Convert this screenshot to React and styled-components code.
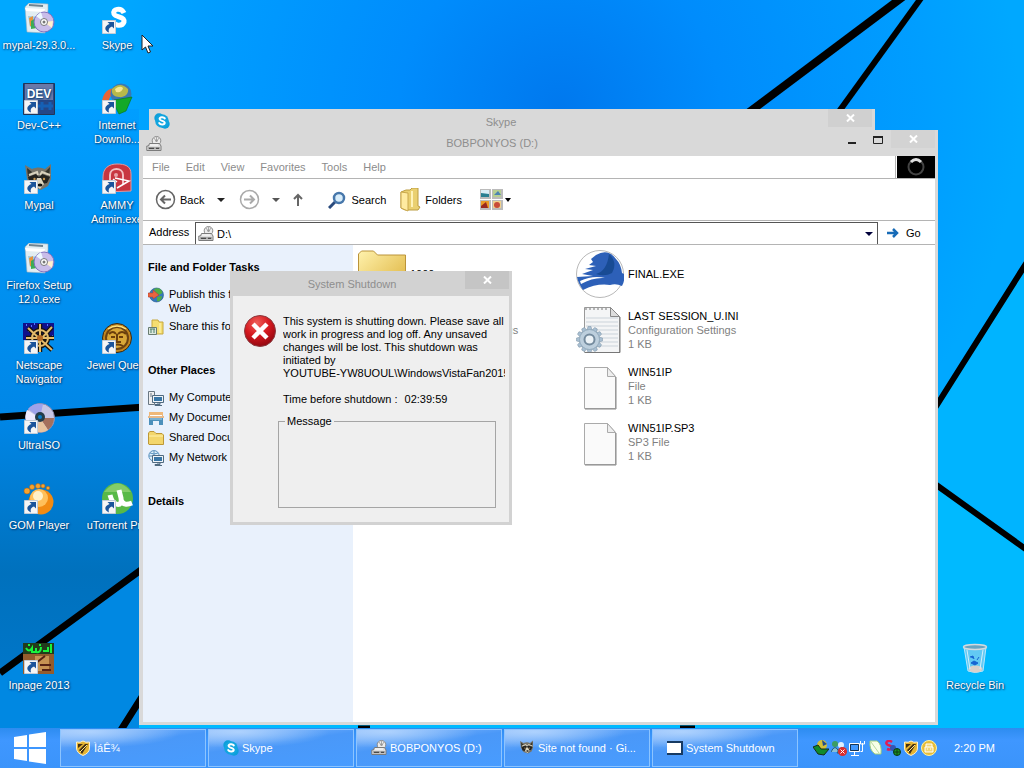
import React from 'react';
import styled, { createGlobalStyle, css } from 'styled-components';

const GlobalStyle = createGlobalStyle`
  * { box-sizing: border-box; }
  body {
    margin: 0;
    font-family: "Liberation Sans", Arial, sans-serif;
    font-size: 11px;
    line-height: 14px;
    color: #000;
    overflow: hidden;
  }
  button, input { font: inherit; color: inherit; }
  button { border: 0; padding: 0; background: none; }
  svg { display: block; flex: none; }
`;

const Screen = styled.div`
  display: flex;
  flex-direction: column;
  height: 100vh;
`;

const Desktop = styled.main`
  position: relative;
  flex: 1;
  min-height: 0;
`;

const Wallpaper = styled.svg`
  position: absolute;
  inset: 0;
  width: 100%;
  height: 100%;
`;

const IconGrid = styled.div`
  position: relative;
  display: grid;
  grid-template-columns: 78px 78px 1fr 78px;
  grid-auto-rows: 80px;
  padding: 3px 10px 0 0;
`;

const ShortcutButton = styled.button`
  grid-column: ${(p) => p.$col};
  grid-row: ${(p) => p.$row};
  display: flex;
  flex-direction: column;
  align-items: center;
  justify-content: flex-start;
  gap: 3px;
  color: #fff;
  text-align: center;
  white-space: nowrap;
  text-shadow: 1px 1px 2px #003a70, 0 0 2px #00508f;
`;

const ShortcutLabel = styled.span`
  white-space: pre;
`;

const Cursor = styled.svg`
  position: absolute;
  left: 141px;
  top: 34px;
`;

/* Windows */
const frame = css`
  position: absolute;
  display: flex;
  flex-direction: column;
  background: #d9d9d9;
`;

const SkypeWindow = styled.section`
  ${frame}
  left: 149px;
  right: 149px;
  top: 109px;
  height: 200px;
  padding: 0 3px;
`;

const ExplorerWindow = styled.section`
  ${frame}
  left: 139px;
  right: 86px;
  top: 130px;
  bottom: 3px;
  padding: 0 3px 3px 4px;
`;

const DialogWindow = styled.section`
  ${frame}
  left: 230px;
  top: 271px;
  width: 282px;
  height: 254px;
  padding: 0 3px;
  border-bottom: 3px solid #d2d2d2;
  background: #d2d2d2;
`;

const TitleBar = styled.header`
  position: relative;
  flex: none;
  display: flex;
  align-items: center;
  justify-content: center;
  height: ${(p) => p.$height}px;
`;

const WindowTitle = styled.h1`
  margin: 0;
  padding-right: ${(p) => p.$shift || 0}px;
  font-size: 11px;
  font-weight: 400;
  color: #8e8e8e;
`;

const TitleIcon = styled.span`
  position: absolute;
  left: ${(p) => p.$left}px;
  bottom: ${(p) => p.$bottom}px;
`;

const WindowButtons = styled.div`
  position: absolute;
  top: 0;
  right: 0;
  display: flex;
`;

const FrameButton = styled.button`
  display: grid;
  place-items: center;
  width: 26px;
  height: 19px;
`;

const CloseButton = styled(FrameButton)`
  width: 44px;
  height: 18px;
  background: ${(p) => p.$tone};
`;

/* Explorer */
const MenuBar = styled.nav`
  display: flex;
  flex: none;
  height: 23px;
  background: #fff;
  border-bottom: 1px solid #b4b4b4;
`;

const MenuItems = styled.div`
  display: flex;
  flex: 1;
  align-items: center;
  gap: 16px;
  padding-left: 9px;
  color: #8c8c8c;
  border-right: 1px solid #b4b4b4;
`;

const Throbber = styled.div`
  display: grid;
  place-items: center;
  width: 39px;
  border-left: 1px solid #fff;
  background: #000;
`;

const Toolbar = styled.div`
  display: flex;
  flex: none;
  align-items: center;
  height: 42px;
  padding-left: 12px;
  background: #fff;
  border-bottom: 1px solid #b4b4b4;
`;

const ToolButton = styled.button`
  display: flex;
  align-items: center;
  gap: ${(p) => p.$gap || 4}px;
  margin-right: ${(p) => p.$after || 0}px;
`;

const AddressBar = styled.div`
  display: flex;
  flex: none;
  height: 24px;
  background: #fff;
  border-bottom: 1px solid #b4b4b4;
`;

const AddressLabel = styled.label`
  width: 52px;
  padding: 4px 0 0 6px;
`;

const AddressField = styled.div`
  display: flex;
  flex: 1;
  align-items: center;
  margin-top: 1px;
  padding: 0 4px 0 2px;
  border: solid #555;
  border-width: 1px 1px 0 1px;
`;

const AddressInput = styled.input`
  flex: 1;
  min-width: 0;
  padding: 0 3px;
  border: 0;
  outline: 0;
  background: none;
`;

const GoButton = styled.button`
  display: flex;
  align-items: center;
  gap: 6px;
  width: 57px;
  padding-left: 8px;
`;

const ExplorerBody = styled.div`
  display: flex;
  flex: 1;
  min-height: 0;
  background: #fff;
`;

const Sidebar = styled.aside`
  display: flex;
  flex-direction: column;
  gap: 28px;
  width: 210px;
  padding: 15px 5px;
  background: #e9f1fc;
`;

const TaskHeading = styled.h2`
  margin: 0;
  font-size: 11px;
  font-weight: 700;
`;

const TaskList = styled.ul`
  display: flex;
  flex-direction: column;
  gap: 4px;
  margin: 13px 0 0;
  padding: 0;
  list-style: none;
`;

const TaskLink = styled.a`
  display: flex;
  gap: 5px;
  min-height: 16px;
  color: #000;
  text-decoration: none;
`;

const TaskText = styled.span`
  width: 132px;
`;

const Files = styled.div`
  display: flex;
  flex: 1;
  padding: 1px 0 0 5px;
`;

const FileColumn = styled.ul`
  width: 218px;
  margin: 0;
  padding: 0;
  list-style: none;
`;

const FileItem = styled.li`
  display: flex;
  align-items: center;
  gap: 4px;
  height: 56px;
`;

const FileDetail = styled.div`
  min-height: 14px;
  color: ${(p) => (p.$muted ? '#7f7f7f' : '#000')};
`;

/* Dialog */
const DialogBody = styled.div`
  display: flex;
  flex: 1;
  gap: 7px;
  min-height: 0;
  padding: 19px 4px 0 11px;
  background: #efefef;
  line-height: 13px;
`;

const DialogContent = styled.div`
  flex: 1;
  min-width: 0;
`;

const DialogText = styled.p`
  margin: 0 0 13px;
  overflow: hidden;
  white-space: nowrap;
`;

const TimeRow = styled.p`
  display: flex;
  gap: 7px;
  margin: 0 0 9px;
`;

const MessageBox = styled.fieldset`
  height: 93px;
  margin: 0 9px 0 -5px;
  padding: 0 6px;
  border: 1px solid #a5a5a5;
`;

const MessageLegend = styled.legend`
  padding: 0 2px;
`;

/* Taskbar */
const Taskbar = styled.footer`
  display: flex;
  flex: none;
  align-items: stretch;
  height: 40px;
  background: linear-gradient(#2d8cf0, #3f97ff 30%, #3b94fb);
  color: #fff;
`;

const StartButton = styled.button`
  display: grid;
  place-items: center;
  width: 60px;
`;

const TaskButtons = styled.div`
  display: flex;
  flex: 1;
  gap: 2px;
  padding: 1px 0;
`;

const TaskButton = styled.button`
  display: flex;
  flex: 0 1 146px;
  align-items: center;
  gap: 3px;
  padding-left: 14px;
  border: 1px solid #8cc4ff;
  background:
    radial-gradient(ellipse 90px 16px at 30px 2px, rgba(190, 220, 255, 0.75), transparent),
    linear-gradient(172deg, #86b8fa 5%, #4a98f8 40%, #489cff);
  white-space: nowrap;
`;

const Tray = styled.div`
  display: flex;
  align-items: center;
  gap: 2px;
  width: 225px;
  padding-left: 14px;
`;

const Clock = styled.time`
  margin-left: 15px;
`;

/* Drawings */
const Caret = ({ color = '#000' }) => (
  <svg width="8" height="4" viewBox="0 0 8 4"><path d="M0 0h8L4 4z" fill={color} /></svg>
);

const CloseMark = () => (
  <svg width="9" height="8" viewBox="0 0 9 8"><path d="M1 0.5l7 7M8 0.5l-7 7" stroke="#fff" strokeWidth="2" /></svg>
);

const Drive = ({ size = 16 }) => (
  <svg width={size} height={size} viewBox="0 0 16 16">
    <circle cx="10.5" cy="4.8" r="4.3" fill="#ececec" stroke="#8b8b8b" />
    <path d="M10.5 1v3M8 2l2 3M13 2l-2 3" stroke="#aaa" />
    <circle cx="10.5" cy="4.8" r="1.2" fill="#999" />
    <path d="M2.500 10l1-2.500h10l1.500 2.500v4.500H.8V10z" fill="#dedede" stroke="#7b7b7b" />
    <path d="M2 11h12v2.500H2z" fill="#aaa" />
    <path d="M3 12.300h5M10 12.300h3" stroke="#333" />
    <path d="M4 9h8" stroke="#fff" />
  </svg>
);

const SkypeLogo = () => (
  <svg width="16" height="16" viewBox="0 0 16 16">
    <circle cx="5" cy="5" r="4.7" fill="#0c9fdb" />
    <circle cx="11" cy="11" r="4.7" fill="#0c9fdb" />
    <circle cx="8" cy="8" r="6.8" fill="#12a5df" />
    <path d="M10.8 5.4C9.6 3.5 5.5 3.9 5.6 6c.1 2.3 5.1 1.4 5.1 3.8 0 2.3-4.3 2.4-5.5.3" fill="none" stroke="#fff" strokeWidth="2" strokeLinecap="round" />
  </svg>
);

const Globe = ({ arrow }) => (
  <svg width="16" height="16" viewBox="0 0 16 16">
    <circle cx="8.5" cy="8" r="7" fill="#3478bd" stroke="#245684" strokeWidth=".6" />
    <path d="M6 2c4-2 8 0 8.5 4L11 8 8 6zM9 10l5-1c0 4-3 6-5 5z" fill="#51ad45" />
    {arrow && <path d="M0 6h5V3l6 5-6 4v-2H0z" fill="#e86540" stroke="#b53a26" strokeWidth=".5" />}
  </svg>
);

const SmallFolder = () => (
  <svg width="16" height="16" viewBox="0 0 16 16">
    <path d="M.5 14V2.8L2 1.5h4l2 2h6l1.5 1.5v9.5H1z" fill="#f3d66b" stroke="#bd9837" />
    <path d="M1 6h14" stroke="#fff1ad" />
  </svg>
);

const ShareFolder = () => (
  <svg width="16" height="16" viewBox="0 0 16 16">
    <path d="M4 1h6l1 2h4v12H4z" fill="#f4de70" stroke="#c6a83f" />
    <path d="M12 4v10" stroke="#fff8bd" />
    <path d="M.5 8.5h8v7h-8z" fill="#dce7dd" stroke="#687c70" />
    <path d="M2 10h5M3 10v4M6 10v4" stroke="#4a806a" />
  </svg>
);

const Computer = ({ network }) => (
  <svg width="16" height="16" viewBox="0 0 16 16">
    {network ? (
      <g fill="#e0f0fb" stroke="#5890bc"><circle cx="6" cy="5.8" r="5.2" /><path d="M1 6h10M6 1v10M2 3q4 2 8 0" fill="none" /></g>
    ) : (
      <g fill="#eee" stroke="#697782"><path d="M.5 1.5h6v13h-6z" /><path d="M2 4h2M2 6h2" /></g>
    )}
    <path d="M4.5 5.5h11v7h-11z" fill="#eef3f8" stroke="#506a7f" />
    <path d="M6 7h8v4H6z" fill="#3776a7" />
    <path d="M9 13h3v1.5H7v1h7" fill="none" stroke="#506a7f" />
  </svg>
);

const Documents = () => (
  <svg width="16" height="16" viewBox="0 0 16 16">
    <path d="M1 2h14v4H1z" fill="#efb879" /><path d="M2 5h12v4H2z" fill="#fff" />
    <path d="M0 6h16v2H0z" fill="#e7b98b" />
    <path d="M1 8h14v7h-4v-4H5v4H1z" fill="#4c90bb" /><path d="M2 9h12" stroke="#a4d2ee" />
  </svg>
);

const ErrorMark = () => (
  <svg width="32" height="32" viewBox="0 0 32 32">
    <defs><radialGradient id="err" cx=".4" cy=".25" r=".8"><stop stopColor="#f0605a" /><stop offset=".5" stopColor="#d5191f" /><stop offset="1" stopColor="#8c050e" /></radialGradient></defs>
    <circle cx="16" cy="16" r="15.5" fill="url(#err)" stroke="#8a3a3e" />
    <path d="M9 9l14 14M23 9L9 23" stroke="#fff" strokeWidth="4.500" />
  </svg>
);

const Overlay = () => (
  <g>
    <path d="M1.500 17.500h13v13h-13z" fill="#f5f5f5" stroke="#c3ccd7" />
    <path d="M6.500 19H13v6.500l-2-2c-3 1-4 3-3 6C3 27.500 3 23 8.500 21z" fill="#1b549b" />
  </g>
);

const Art = ({ children, link = true }) => (
  <svg width="32" height="32" viewBox="0 0 32 32">{children}{link && <Overlay />}</svg>
);

const Installer = () => (
  <Art link={false}>
    <path d="M2 4l4-4 19 1v6l-3 23-18-1z" fill="#e2edf2" stroke="#9db0bd" strokeWidth=".6" />
    <path d="M2 5l20 1-1 3L3 8z" fill="#fff" /><path d="M6 2l14 1" stroke="#708491" strokeWidth="2" />
    <path d="M5 13l12 1-1 10H7z" fill="#9ccbe4" /><path d="M6 15l4-2v10H7z" fill="#e7943c" /><path d="M8 18l5-3 1 10-6 1z" fill="#3bad56" />
    <circle cx="21" cy="19" r="10" fill="#c9bde9" stroke="#8272bf" />
    <path d="M21 19L13 13l5-4z" fill="#edf8ff" /><path d="M21 19l8 6 1-7z" fill="#fff0cf" />
    <circle cx="21" cy="19" r="3.500" fill="#fff" stroke="#777" /><circle cx="21" cy="19" r="1.500" fill="#777" />
  </Art>
);

const Raccoon = () => (
  <g>
    <path d="M2 2l7 4c5-2 9-2 13 0l6-5v15l-3 7-7 4-9-3-5-8z" fill="#77746a" />
    <path d="M4 5l5 4-4 5zM27 4l-5 5 4 5z" fill="#34352d" />
    <path d="M5 14l8-3 3 3 3-3 8 3-3 6-5 1-3-3-3 4-6-1z" fill="#24231f" />
    <path d="M6 12l8-3 1 3M17 12l2-3 8 3" stroke="#d9d2bd" strokeWidth="2" fill="none" />
    <path d="M14 15h4l3 6-4 5-5-4z" fill="#ddd5be" />
    <circle cx="11.500" cy="16" r="1.200" fill="#c69751" /><circle cx="21" cy="16" r="1.200" fill="#c69751" />
    <ellipse cx="17" cy="22" rx="2.500" ry="1.500" fill="#111" />
  </g>
);

const DevArt = () => (
  <Art>
    <path d="M.5.5h31v31H.5z" fill="#244788" stroke="#223557" /><path d="M2 1h28v16H2z" fill="#6979a9" />
    <text x="16" y="15" textAnchor="middle" fill="#fff" fontSize="12" fontWeight="700">DEV</text>
    <path d="M19 19v8M15 23h8M27 19v8M23 23h7" stroke="#1560b5" strokeWidth="3" />
  </Art>
);

const SkypeArt = () => (
  <Art><path d="M23 10C20 4 11 6 13 11c2 4 11 2 10 8-2 5-10 4-11-1" fill="none" stroke="#fff" strokeWidth="5" /></Art>
);

const IdmArt = () => (
  <Art>
    <path d="M1 24C0 13 5 6 13 5l2 6c-6 0-8 5-7 12z" fill="#e86435" />
    <circle cx="20" cy="11" r="10.500" fill="#3978b4" /><path d="M11 6q8-8 16 0c1 5-4 9-9 8-5 0-8-3-7-8z" fill="#b8b94b" /><path d="M14 6q5-4 8-1-1 5-7 4z" fill="#f5e894" />
    <path d="M13 17l18-3-6 14-7 3-4-8-3-2z" fill="#13a928" stroke="#087018" strokeWidth=".6" />
  </Art>
);

const AmmyArt = () => (
  <Art>
    <path d="M2 29V14C2 5 8 1 16 1s14 2 14 10v17z" fill="#c83640" stroke="#e6969a" />
    <path d="M9 20v-8c0-8 13-8 13 0v10" fill="none" stroke="#f2bdc0" strokeWidth="2" />
    <circle cx="15" cy="12" r="2" fill="#e7a5a9" /><path d="M14 15l14 3-12 7M16 19l-4-3" fill="none" stroke="#fff" strokeWidth="1.500" />
  </Art>
);

const NetscapeArt = () => (
  <Art>
    <path d="M0 0h31v17H0z" fill="#10108a" />
    <path d="M3 2h1M8 3h1M5 8h1M11 1h1M24 2h1M28 6h1M4 14h1M29 13h1" stroke="#5573ff" strokeWidth="2" />
    <g stroke="#17120d" strokeWidth="4.500" fill="none"><circle cx="17" cy="15" r="8" /><path d="M5 5l24 22M29 4L7 28M17 1v28M3 15h28" /></g>
    <g stroke="#e4bb6b" strokeWidth="2" fill="none"><circle cx="17" cy="15" r="8" /><path d="M5 5l24 22M29 4L7 28M17 1v28M3 15h28" /></g>
    <circle cx="17" cy="15" r="3" fill="#b46a27" />
  </Art>
);

const JewelArt = () => (
  <Art>
    <circle cx="16" cy="15" r="14.500" fill="#c18620" stroke="#392610" /><circle cx="16" cy="15" r="11" fill="#d9a737" stroke="#6d4312" strokeWidth="2" />
    <path d="M8 11q4-4 7 0M17 11q4-4 8 0M16 11v6l-3 2h7M11 23q6-3 11 0M10 14h4M18 14h4" fill="none" stroke="#6b3e0c" strokeWidth="2" />
    <path d="M7 6q9-6 18 0" fill="none" stroke="#ffe27a" strokeWidth="1.500" />
  </Art>
);

const DiscArt = () => (
  <Art>
    <circle cx="17" cy="15" r="14.500" fill="#c7c5e4" stroke="#8b8bae" /><path d="M17 15L5 6Q10 0 20 1z" fill="#9ea2ea" />
    <path d="M17 15h14q0 7-6 12z" fill="#a4705d" /><path d="M17 15l8 12q-6 4-12 1z" fill="#e8c39e" /><path d="M17 15L4 7q-3 7 0 12z" fill="#eeeaff" />
    <circle cx="17" cy="14" r="5" fill="#243c4a" /><circle cx="17" cy="14" r="2" fill="#087bc7" />
  </Art>
);

const GomArt = () => (
  <Art>
    <circle cx="18" cy="19" r="12.500" fill="#f28b13" /><circle cx="16" cy="15" r="9" fill="#ffc05b" /><circle cx="15" cy="13" r="5" fill="#fff0c8" />
    <g fill="#f8a42c" stroke="#b75f10" strokeWidth=".5"><circle cx="4" cy="8" r="3" /><circle cx="9" cy="4" r="2.500" /><circle cx="15" cy="3" r="2.500" /><circle cx="20" cy="3" r="2" /><circle cx="25" cy="5" r="1.800" /></g>
  </Art>
);

const TorrentArt = () => (
  <Art>
    <circle cx="16.500" cy="15.500" r="15.500" fill="#58b947" /><path d="M3 9Q17-8 30 9" fill="#83cc68" />
    <path d="M9 12c3 12 13 12 11 3L18 7M20 17c2 5 6 5 11 3" fill="none" stroke="#fff" strokeWidth="5" />
  </Art>
);

const InpageArt = () => (
  <Art>
    <path d="M0 0h31v31H0z" fill="#935c2d" /><path d="M0 0h31v11H0z" fill="#223c1c" /><path d="M12 13h14v15H12z" fill="#c69353" />
    <path d="M3 5q3 5 6 0v4h4V5M13 9q5 1 5-5M20 8h5V4M28 1v9M5 2h2M16 2h2" stroke="#18f53d" strokeWidth="2" fill="none" />
    <path d="M13 20l9-7M17 22h11M19 27h9" stroke="#552315" strokeWidth="2" />
  </Art>
);

const BinArt = () => (
  <Art link={false}>
    <path d="M5 4h22l-3 24q-8 3-15 0z" fill="#83cdf0" fillOpacity=".75" stroke="#b9e7fc" />
    <ellipse cx="16" cy="4" rx="11.500" ry="2.500" fill="#68a4c1" stroke="#d4dade" strokeWidth="1.500" />
    <ellipse cx="16.500" cy="26" rx="7" ry="3.500" fill="#d9d0ca" /><path d="M8 7l3 19M24 7l-3 19" stroke="#d4f0fb" />
    <path d="M11 14l3-1 1 3M20 14l-2 3M15 18l-3 2 4 2 3-2z" fill="#1765d2" stroke="#1765d2" />
  </Art>
);

const Shield = () => (
  <svg width="16" height="16" viewBox="0 0 16 16">
    <path d="M1.500 2q4 1 6.500-1 2.500 2 6.500 1v6q0 5-6.500 7.500Q1.500 13 1.500 8z" fill="#e5b431" stroke="#fff0c8" />
    <path d="M4 10l6-6h3L7 14zM3 4h5l-5 4z" fill="#443014" /><path d="M5 12l7-7" stroke="#ffe989" />
  </svg>
);

const BlankFile = () => (
  <svg width="48" height="48" viewBox="0 0 48 48">
    <path d="M8.500 5.500h23l8 9v32h-31z" fill="#fafafa" stroke="#aaa" /><path d="M31.500 5.500v9h8z" fill="#eee" stroke="#aaa" /><path d="M9 47h31V15" fill="none" stroke="#888" />
  </svg>
);

const IniFile = () => {
  const teeth = [0, 30, 60, 90, 120, 150, 180, 210, 240, 270, 300, 330];
  return (
    <svg width="48" height="48" viewBox="0 0 48 48">
      <path d="M8.500 1.500h26l9 9v36h-35z" fill="#f4f5f6" stroke="#999" /><path d="M34.500 1.500v9h9z" fill="#ddd" stroke="#888" />
      <path d="M10 12h32M10 16h32M10 20h32M10 24h32M10 28h32M10 32h32M10 36h32M10 40h32" stroke="#cbd3da" />
      <path d="M10 2v2M14 2v2M18 2v2M22 2v2M26 2v2M30 2v2" stroke="#777" />
      <g transform="translate(13.5 33.500)">
        {teeth.map((a) => <path key={a} d="M-1.500-13h3L2.500-9h-5z" fill="#a9bfd2" stroke="#7890a5" strokeWidth=".5" transform={`rotate(${a})`} />)}
        <circle r="10" fill="#bdcfdd" stroke="#829bad" strokeWidth=".6" /><circle r="5" fill="#edf3f7" stroke="#748b9e" strokeWidth="2" />
      </g>
      <path d="M9 46.500h35V11" fill="none" stroke="#777" />
    </svg>
  );
};

const FinalFile = () => (
  <svg width="48" height="48" viewBox="0 0 48 48">
    <circle cx="24" cy="24" r="23.500" fill="#fff" stroke="#999" strokeWidth=".7" />
    <path d="M1 27l16-1-11-2 11-4-8-1 11-3-7-1 4-3-2-3 5-4q12-7 20 4 5 5 6 14l2 1q1 7-2 12-6-3-12-1-13-2-27 5-5-7-6-13z" fill="#2d60b8" />
    <path d="M4 31q13-6 25-3-12-1-24 6z" fill="#fff" />
    <path d="M33 4q9 8 3 19-7 4-16 1 11-3 13-20z" fill="#184b94" />
  </svg>
);

const LargeFolder = () => (
  <svg width="48" height="48" viewBox="0 0 48 48">
    <defs><linearGradient id="folder" x2="1" y2="1"><stop stopColor="#fff2ad" /><stop offset="1" stopColor="#dbae35" /></linearGradient></defs>
    <path d="M.5 44V4l3-3h12l4 4h28v39z" fill="url(#folder)" stroke="#bb943a" />
  </svg>
);

const RoundArrow = ({ forward }) => (
  <svg width="21" height="21" viewBox="0 0 21 21" stroke={forward ? '#aaa' : '#666'} fill="none">
    <circle cx="10.500" cy="10.500" r="9" strokeWidth="1.500" />
    <path d={forward ? 'M5 10.500h10M11 6.500l4 4-4 4' : 'M16 10.500H6M10 6.500l-4 4 4 4'} strokeWidth="2" />
  </svg>
);

const shortcuts = [
  ['mypal-29.3.0...', 1, 1, Installer],
  ['Skype', 2, 1, SkypeArt],
  ['Dev-C++', 1, 2, DevArt],
  ['Internet\nDownlo...', 2, 2, IdmArt],
  ['Mypal', 1, 3, () => <Art><Raccoon /></Art>],
  ['AMMY\nAdmin.exe', 2, 3, AmmyArt],
  ['Firefox Setup\n12.0.exe', 1, 4, Installer],
  ['Netscape\nNavigator', 1, 5, NetscapeArt],
  ['Jewel Quest', 2, 5, JewelArt],
  ['UltraISO', 1, 6, DiscArt],
  ['GOM Player', 1, 7, GomArt],
  ['uTorrent Pro', 2, 7, TorrentArt],
  ['Inpage 2013', 1, 9, InpageArt],
  ['Recycle Bin', 4, 9, BinArt],
];

const TaskLine = ({ icon, children }) => (
  <li><TaskLink href="#">{icon}<TaskText>{children}</TaskText></TaskLink></li>
);

const FileEntry = ({ icon, name, details = [] }) => (
  <FileItem>
    {icon}
    <div>
      <FileDetail>{name}</FileDetail>
      {details.map((d) => <FileDetail $muted key={d}>{d}</FileDetail>)}
    </div>
  </FileItem>
);

const Explorer = () => (
  <ExplorerWindow>
    <TitleBar $height={26}>
      <TitleIcon $left={3} $bottom={4}><Drive /></TitleIcon>
      <WindowTitle $shift={94}>BOBPONYOS (D:)</WindowTitle>
      <WindowButtons>
        <FrameButton aria-label="Minimize"><svg width="8" height="10"><path d="M0 7h8v2H0z" fill="#222" /></svg></FrameButton>
        <FrameButton aria-label="Maximize"><svg width="10" height="8"><path d="M.5 1h9v6.500h-9z" fill="none" stroke="#222" /><path d="M0 1h10" stroke="#222" strokeWidth="2" /></svg></FrameButton>
        <CloseButton $tone="#d3d3d3" aria-label="Close"><CloseMark /></CloseButton>
      </WindowButtons>
    </TitleBar>
    <MenuBar>
      <MenuItems>
        {['File', 'Edit', 'View', 'Favorites', 'Tools', 'Help'].map((m) => <button key={m}>{m}</button>)}
      </MenuItems>
      <Throbber>
        <svg width="18" height="18"><circle cx="9" cy="9" r="7.500" fill="none" stroke="#444" strokeWidth="2" /><path d="M4 4q5-5 10 0" fill="none" stroke="#ddd" strokeWidth="3" /></svg>
      </Throbber>
    </MenuBar>
    <Toolbar>
      <ToolButton $after={13}><RoundArrow />Back</ToolButton>
      <ToolButton $after={14} aria-label="Back history"><Caret color="#222" /></ToolButton>
      <ToolButton $gap={12} $after={13} aria-label="Forward"><RoundArrow forward /><Caret color="#555" /></ToolButton>
      <ToolButton $after={25} aria-label="Up"><svg width="10" height="13"><path d="M5 13V2M1 6l4-4 4 4" fill="none" stroke="#666" strokeWidth="2" /></svg></ToolButton>
      <ToolButton $gap={5} $after={14}>
        <svg width="18" height="18"><path d="M7 11l-6 6" stroke="#294a7d" strokeWidth="3" /><circle cx="11" cy="7" r="5" fill="#d8edfb" stroke="#4777ab" strokeWidth="2.500" /></svg>
        Search
      </ToolButton>
      <ToolButton $after={18}>
        <svg width="21" height="24"><path d="M1 4l5-2h4l2-2h6v18l2 1-2 3H5l-4-2z" fill="#ead070" stroke="#bc9d42" /><path d="M1 4l7 1v18l-7-3z" fill="#ffeba1" stroke="#caa84c" /><path d="M12 3v16" stroke="#fff3b9" strokeWidth="2" /></svg>
        Folders
      </ToolButton>
      <ToolButton $gap={2} aria-label="Views">
        <svg width="23" height="21">
          <path d="M0 0h11v10H0zM12 0h11v10H12zM0 11h11v10H0zM12 11h11v10H12z" fill="#bbb" />
          <path d="M1 1h8v7H1z" fill="#d9edf5" /><path d="M1 4l8 1v3H1z" fill="#287f91" /><path d="M13 1h8v7h-8z" fill="#b7ce91" /><path d="M14 6l4-4 3 4z" fill="#4b84b0" />
          <path d="M1 12h8v7H1z" fill="#e99a24" /><path d="M1 17l5-4 2 6H1z" fill="#9a281d" /><path d="M13 12h8v7h-8z" fill="#efd18d" /><circle cx="17" cy="16" r="3" fill="#c84b39" />
        </svg>
        <svg width="6" height="4"><path d="M0 0h6L3 4z" /></svg>
      </ToolButton>
    </Toolbar>
    <AddressBar>
      <AddressLabel htmlFor="address">Address</AddressLabel>
      <AddressField>
        <Drive />
        <AddressInput id="address" defaultValue={'D:\\'} />
        <button aria-label="Show addresses"><Caret color="#00003a" /></button>
      </AddressField>
      <GoButton>
        <svg width="14" height="12"><path d="M1 6h10M7 2l4 4-4 4" fill="none" stroke="#176bb7" strokeWidth="2.500" /></svg>
        Go
      </GoButton>
    </AddressBar>
    <ExplorerBody>
      <Sidebar>
        <section>
          <TaskHeading>File and Folder Tasks</TaskHeading>
          <TaskList>
            <TaskLine icon={<Globe arrow />}>Publish this folder to the Web</TaskLine>
            <TaskLine icon={<ShareFolder />}>Share this folder</TaskLine>
          </TaskList>
        </section>
        <section>
          <TaskHeading>Other Places</TaskHeading>
          <TaskList>
            <TaskLine icon={<Computer />}>My Computer</TaskLine>
            <TaskLine icon={<Documents />}>My Documents</TaskLine>
            <TaskLine icon={<SmallFolder />}>Shared Documents</TaskLine>
            <TaskLine icon={<Computer network />}>My Network Places</TaskLine>
          </TaskList>
        </section>
        <TaskHeading>Details</TaskHeading>
      </Sidebar>
      <Files>
        <FileColumn>
          <FileEntry icon={<LargeFolder />} name="1000" />
          <FileEntry icon={<IniFile />} details={['Configuration Settings', '1 KB']} />
        </FileColumn>
        <FileColumn>
          <FileEntry icon={<FinalFile />} name="FINAL.EXE" />
          <FileEntry icon={<IniFile />} name="LAST SESSION_U.INI" details={['Configuration Settings', '1 KB']} />
          <FileEntry icon={<BlankFile />} name="WIN51IP" details={['File', '1 KB']} />
          <FileEntry icon={<BlankFile />} name="WIN51IP.SP3" details={['SP3 File', '1 KB']} />
        </FileColumn>
      </Files>
    </ExplorerBody>
  </ExplorerWindow>
);

const ShutdownDialog = () => (
  <DialogWindow role="dialog" aria-label="System Shutdown">
    <TitleBar $height={25}>
      <WindowTitle $shift={38}>System Shutdown</WindowTitle>
      <WindowButtons><CloseButton $tone="#c5c5c5" aria-label="Close"><CloseMark /></CloseButton></WindowButtons>
    </TitleBar>
    <DialogBody>
      <ErrorMark />
      <DialogContent>
        <DialogText>
          This system is shutting down. Please save all<br />
          work in progress and log off. Any unsaved<br />
          changes will be lost. This shutdown was<br />
          initiated by<br />
          YOUTUBE-YW8UOUL\WindowsVistaFan2015
        </DialogText>
        <TimeRow><span>Time before shutdown :</span><span>02:39:59</span></TimeRow>
        <MessageBox><MessageLegend>Message</MessageLegend></MessageBox>
      </DialogContent>
    </DialogBody>
  </DialogWindow>
);

export default function App() {
  return (
    <>
      <GlobalStyle />
      <Screen>
        <Desktop>
          <Wallpaper viewBox="0 0 1024 728" preserveAspectRatio="none">
            <defs>
              <radialGradient id="sky" gradientUnits="userSpaceOnUse" cx="560" cy="110" r="460"><stop stopColor="#0078ee" /><stop offset=".35" stopColor="#008cfc" /><stop offset=".8" stopColor="#009eff" /><stop offset="1" stopColor="#00a8ff" /></radialGradient>
              <linearGradient id="shade" x2="0" y2="1"><stop stopColor="#009eff" /><stop offset=".5" stopColor="#0086e6" /><stop offset=".75" stopColor="#0071bd" /><stop offset="1" stopColor="#0079cf" /></linearGradient>
            </defs>
            <path d="M0 0h1024v728H0z" fill="url(#sky)" />
            <path d="M0 109h139v619H0z" fill="url(#shade)" />
            <path d="M0 675L139 572v156H0z" fill="#0088e2" />
            <path d="M938 405l86-135v458h-86z" fill="#00b4ff" />
            <path d="M938 485l86 62v181H139v-3h799z" fill="#00baff" />
            <g stroke="#000" fill="none">
              <path d="M904-4L744 116" strokeWidth="8" /><path d="M924-6L830 124" strokeWidth="6" />
              <path d="M0 417l145-10M0 673l145-106M121 730l24-38" strokeWidth="7" />
              <path d="M935 408l92-146M935 484l92 66" strokeWidth="6" />
              <path d="M358 727h12M680 727h15" strokeWidth="3" />
            </g>
          </Wallpaper>
          <IconGrid>
            {shortcuts.map(([label, col, row, Picture]) => (
              <ShortcutButton key={label} $col={col} $row={row}><Picture /><ShortcutLabel>{label}</ShortcutLabel></ShortcutButton>
            ))}
          </IconGrid>
          <SkypeWindow>
            <TitleBar $height={26}>
              <TitleIcon $left={2} $bottom={6}><SkypeLogo /></TitleIcon>
              <WindowTitle $shift={22}>Skype</WindowTitle>
              <WindowButtons><CloseButton $tone="#d0d0d0" aria-label="Close"><CloseMark /></CloseButton></WindowButtons>
            </TitleBar>
          </SkypeWindow>
          <Explorer />
          <ShutdownDialog />
          <Cursor width="13" height="20"><path d="M1 1v15l3.500-3 2.500 6 2.500-1L7 12h5z" fill="#fff" stroke="#222" /></Cursor>
        </Desktop>
        <Taskbar>
          <StartButton aria-label="Start">
            <svg width="32" height="32" viewBox="0 0 32 32"><path d="M0 5l13-2v12H0zM15 2.500L32 0v15H15zM0 17h13v12L0 27zM15 17h17v15l-17-2.500z" fill="#fff" /></svg>
          </StartButton>
          <TaskButtons>
            <TaskButton><Shield />ÌáÊ¾</TaskButton>
            <TaskButton><SkypeLogo />Skype</TaskButton>
            <TaskButton><Drive />BOBPONYOS (D:)</TaskButton>
            <TaskButton><svg width="16" height="16" viewBox="0 0 32 32"><Raccoon /></svg>Site not found · Gi...</TaskButton>
            <TaskButton><svg width="16" height="14"><path d="M0 0h16v14H0z" fill="#173a62" /><path d="M0 2h14v10H0z" fill="#fff" /></svg>System Shutdown</TaskButton>
          </TaskButtons>
          <Tray>
            <svg width="16" height="16"><circle cx="9" cy="5" r="5" fill="#d2bf39" /><path d="M0 7l5-2 3 4h8l-5 6-6-1z" fill="#108b2b" stroke="#162e19" /><path d="M9 0l5 4-4 2z" fill="#244d8a" /></svg>
            <svg width="16" height="16"><circle cx="4" cy="4" r="3" fill="#3d9d65" /><circle cx="10" cy="5" r="3" fill="#dcefff" /><path d="M0 12q4-9 8 0M6 13q5-11 9 0z" fill="#88bfd8" stroke="#235d78" /><circle cx="11.500" cy="11.500" r="4.500" fill="#db2d2d" /><path d="M9.500 9.500l4 4M13.500 9.500l-4 4" stroke="#fff" /></svg>
            <svg width="16" height="16" fill="none" stroke="#fff"><path d="M.5 3.500h10v8H.5zM5.500 12v3M2 15.500h8M13.500 3v8.500h-2M11.500 1v3h4V1" /><path d="M1.500 4.500h8v6h-8z" fill="#3f97ff" stroke="#173655" /></svg>
            <svg width="16" height="16"><path d="M3 1h7q5 3 4 13H8Q2 10 3 1z" fill="#f6ffe8" stroke="#9fce80" /><path d="M4 2l8 11" stroke="#b9d99f" /></svg>
            <svg width="16" height="16"><path d="M7 2C3-1-1 3 3 5c6 1 4 6-1 4" fill="none" stroke="#e01d57" strokeWidth="2.500" /><circle cx="8" cy="8" r="3" fill="#3155b3" /><circle cx="12" cy="12" r="3.500" fill="#179527" stroke="#073713" /><path d="M9 12h6M12 9v6" stroke="#123a13" /></svg>
            <Shield />
            <svg width="16" height="16"><circle cx="8" cy="8" r="7.500" fill="#e7bd38" stroke="#fff2a1" /><path d="M4 7h8v5H4zM5 7V4h6v3M6 9h1M9 9h1" fill="#f3d675" stroke="#fff" /></svg>
            <Clock>2:20 PM</Clock>
          </Tray>
        </Taskbar>
      </Screen>
    </>
  );
}
